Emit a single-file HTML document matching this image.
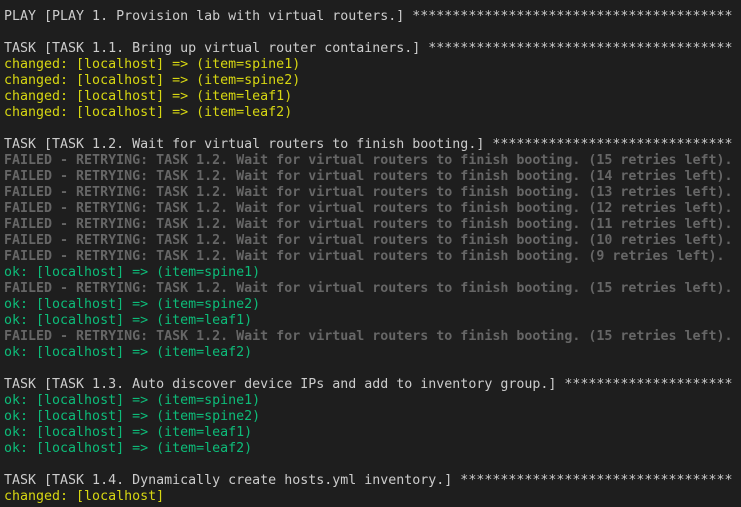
<!DOCTYPE html>
<html><head><meta charset="utf-8"><style>
html,body{margin:0;padding:0;background:#1e1e1e;width:741px;height:507px;overflow:hidden}
pre{margin:0;padding:9px 0 0 4px;font-family:"DejaVu Sans Mono","Liberation Mono",monospace;font-size:13.3px;line-height:16px;color:#cccccc;white-space:pre}
.y{color:#d7d712}.g{color:#0dbc79}.f{color:#666666;font-weight:bold}
</style></head><body><pre>PLAY [PLAY 1. Provision lab with virtual routers.] ****************************************

TASK [TASK 1.1. Bring up virtual router containers.] **************************************
<span class="y">changed: [localhost] =&gt; (item=spine1)</span>
<span class="y">changed: [localhost] =&gt; (item=spine2)</span>
<span class="y">changed: [localhost] =&gt; (item=leaf1)</span>
<span class="y">changed: [localhost] =&gt; (item=leaf2)</span>

TASK [TASK 1.2. Wait for virtual routers to finish booting.] ******************************
<span class="f">FAILED - RETRYING: TASK 1.2. Wait for virtual routers to finish booting. (15 retries left).</span>
<span class="f">FAILED - RETRYING: TASK 1.2. Wait for virtual routers to finish booting. (14 retries left).</span>
<span class="f">FAILED - RETRYING: TASK 1.2. Wait for virtual routers to finish booting. (13 retries left).</span>
<span class="f">FAILED - RETRYING: TASK 1.2. Wait for virtual routers to finish booting. (12 retries left).</span>
<span class="f">FAILED - RETRYING: TASK 1.2. Wait for virtual routers to finish booting. (11 retries left).</span>
<span class="f">FAILED - RETRYING: TASK 1.2. Wait for virtual routers to finish booting. (10 retries left).</span>
<span class="f">FAILED - RETRYING: TASK 1.2. Wait for virtual routers to finish booting. (9 retries left).</span>
<span class="g">ok: [localhost] =&gt; (item=spine1)</span>
<span class="f">FAILED - RETRYING: TASK 1.2. Wait for virtual routers to finish booting. (15 retries left).</span>
<span class="g">ok: [localhost] =&gt; (item=spine2)</span>
<span class="g">ok: [localhost] =&gt; (item=leaf1)</span>
<span class="f">FAILED - RETRYING: TASK 1.2. Wait for virtual routers to finish booting. (15 retries left).</span>
<span class="g">ok: [localhost] =&gt; (item=leaf2)</span>

TASK [TASK 1.3. Auto discover device IPs and add to inventory group.] *********************
<span class="g">ok: [localhost] =&gt; (item=spine1)</span>
<span class="g">ok: [localhost] =&gt; (item=spine2)</span>
<span class="g">ok: [localhost] =&gt; (item=leaf1)</span>
<span class="g">ok: [localhost] =&gt; (item=leaf2)</span>

TASK [TASK 1.4. Dynamically create hosts.yml inventory.] **********************************
<span class="y">changed: [localhost]</span>
</pre></body></html>
